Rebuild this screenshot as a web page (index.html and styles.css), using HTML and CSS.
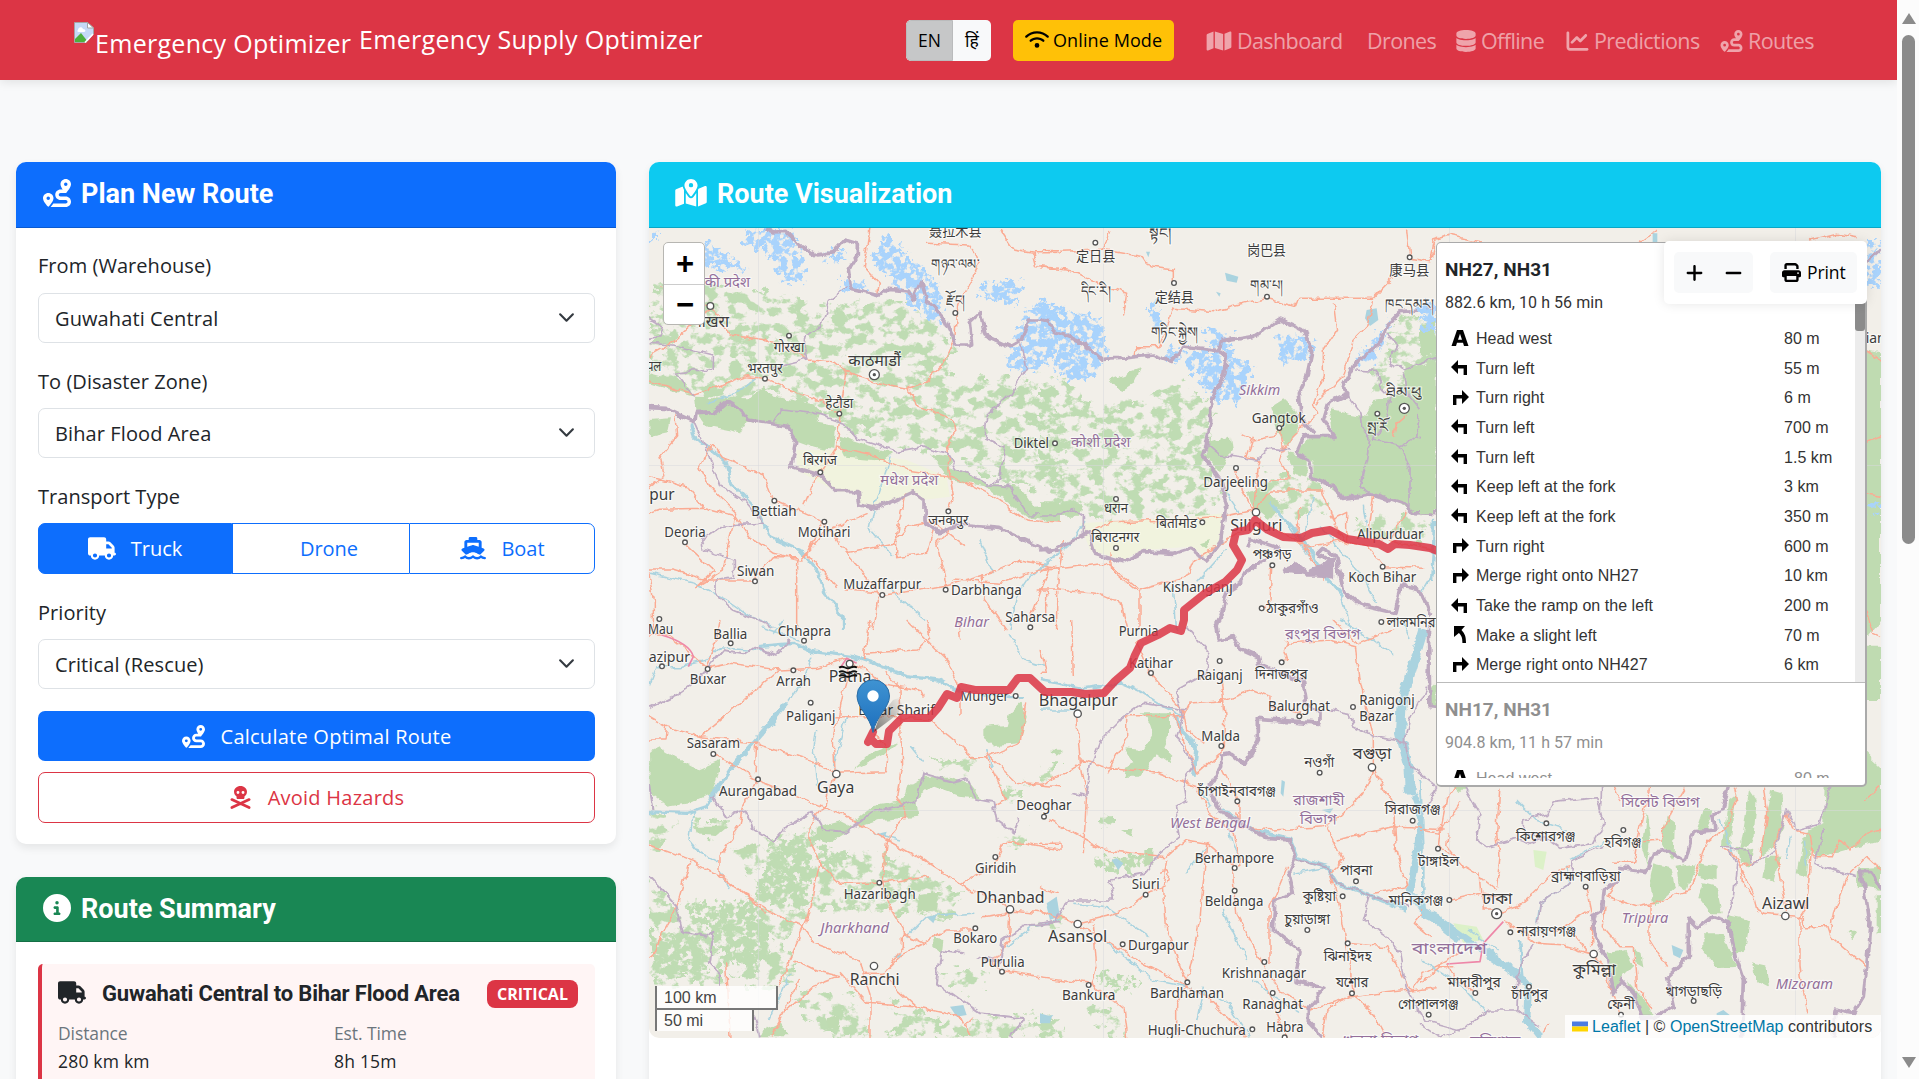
FILE: index.html
```html
<!DOCTYPE html>
<html lang="en">
<head>
<meta charset="utf-8">
<title>Emergency Supply Optimizer</title>
<link rel="stylesheet" href="styles.css">
</head>
<body>
<svg class="defs" width="0" height="0" aria-hidden="true">
  <symbol id="i-route" viewBox="0 0 512 512"><path d="M512 96c0 50.2-59.1 125.1-84.6 155c-3.8 4.4-9.4 6.1-14.5 5H320c-17.7 0-32 14.3-32 32s14.3 32 32 32h96c53 0 96 43 96 96s-43 96-96 96H139.6c8.7-9.9 19.3-22.6 30-36.8c6.3-8.4 12.8-17.6 19-27.2H416c17.7 0 32-14.3 32-32s-14.3-32-32-32H320c-53 0-96-43-96-96s43-96 96-96h39.8c-21-31.5-39.8-67.7-39.8-96c0-53 43-96 96-96s96 43 96 96zM117.1 489.1c-3.8 4.3-7.2 8.1-10.1 11.3l-1.8 2-.2-.2c-6 4.6-14.6 4-20-1.8C59.8 473 0 402.5 0 352c0-53 43-96 96-96s96 43 96 96c0 30-21.1 67-43.5 97.9c-10.7 14.7-21.7 28-30.8 38.5l-.6 .7zM128 352a32 32 0 1 0 -64 0 32 32 0 1 0 64 0zM416 128a32 32 0 1 0 0-64 32 32 0 1 0 0 64z"/></symbol>
  <symbol id="i-truck" viewBox="0 0 640 512"><path d="M48 0C21.5 0 0 21.5 0 48V368c0 26.5 21.5 48 48 48H64c0 53 43 96 96 96s96-43 96-96H384c0 53 43 96 96 96s96-43 96-96h32c17.7 0 32-14.3 32-32s-14.3-32-32-32V288 256 237.3c0-17-6.7-33.3-18.7-45.3L512 114.7c-12-12-28.3-18.7-45.3-18.7H416V48c0-26.5-21.5-48-48-48H48zM416 160h50.7L544 237.3V256H416V160zM112 416a48 48 0 1 1 96 0 48 48 0 1 1 -96 0zm368-48a48 48 0 1 1 0 96 48 48 0 1 1 0-96z"/></symbol>
  <symbol id="i-info" viewBox="0 0 512 512"><path d="M256 512A256 256 0 1 0 256 0a256 256 0 1 0 0 512zM216 336h24V272H216c-13.3 0-24-10.7-24-24s10.7-24 24-24h48c13.3 0 24 10.7 24 24v88h8c13.3 0 24 10.7 24 24s-10.7 24-24 24H216c-13.3 0-24-10.7-24-24s10.7-24 24-24zm40-208a32 32 0 1 1 0 64 32 32 0 1 1 0-64z"/></symbol>
  <symbol id="i-map" viewBox="0 0 576 512"><path d="M384 476.1L192 421.2V35.9L384 90.8V476.1zm32-1.2V88.4L543.1 37.5c15.8-6.3 32.9 5.3 32.9 22.3V394.6c0 9.8-6 18.6-15.1 22.3L416 474.8zM15.1 95.1L160 37.2V423.6L32.9 474.5C17.1 480.8 0 469.2 0 452.2V117.4c0-9.8 6-18.6 15.1-22.3z"/></symbol>
  <symbol id="i-mapdot" viewBox="0 0 576 512"><path d="M408 120c0 54.6-73.1 151.9-105.2 192c-7.7 9.6-22 9.6-29.6 0C241.1 271.9 168 174.6 168 120C168 53.7 221.7 0 288 0s120 53.7 120 120zm8 80.4c3.5-6.9 6.7-13.8 9.6-20.6c.5-1.2 1-2.5 1.5-3.7l116-46.4C558.9 123.4 576 135 576 152V422.8c0 9.8-6 18.6-15.1 22.3L416 503V200.4zM137.6 138.3c2.4 14.1 7.2 28.3 12.8 41.5c2.9 6.8 6.1 13.7 9.6 20.6V451.8L32.9 502.7C17.1 509 0 497.4 0 480.4V209.6c0-9.8 6-18.6 15.1-22.3l122.6-49zM327.8 332c13.9-17.4 35.7-45.7 56.2-77V504.3L192 449.4V255c20.5 31.3 42.3 59.6 56.2 77c20.5 25.6 59.1 25.6 79.6 0zM288 152a40 40 0 1 0 0-80 40 40 0 1 0 0 80z"/></symbol>
  <symbol id="i-db" viewBox="0 0 448 512"><path d="M448 80v48c0 44.2-100.3 80-224 80S0 172.2 0 128V80C0 35.8 100.3 0 224 0S448 35.8 448 80zM393.2 214.7c20.8-7.4 39.9-16.9 54.8-28.6V288c0 44.2-100.3 80-224 80S0 332.2 0 288V186.1c14.9 11.8 34 21.2 54.8 28.6C99.7 230.7 159.5 240 224 240s124.3-9.3 169.2-25.3zM0 346.1c14.9 11.8 34 21.2 54.8 28.6C99.7 390.7 159.5 400 224 400s124.3-9.3 169.2-25.3c20.8-7.4 39.9-16.9 54.8-28.6V432c0 44.2-100.3 80-224 80S0 476.2 0 432V346.1z"/></symbol>
  <symbol id="i-chart" viewBox="0 0 512 512"><path d="M64 64c0-17.7-14.3-32-32-32S0 46.3 0 64V400c0 44.2 35.8 80 80 80H480c17.7 0 32-14.3 32-32s-14.3-32-32-32H80c-8.8 0-16-7.2-16-16V64zm406.6 86.6c12.5-12.5 12.5-32.8 0-45.3s-32.8-12.5-45.3 0L320 210.7l-57.4-57.4c-12.5-12.5-32.8-12.5-45.3 0l-112 112c-12.5 12.5-12.5 32.8 0 45.3s32.8 12.5 45.3 0L240 221.3l57.4 57.4c12.5 12.5 32.8 12.5 45.3 0l128-128z"/></symbol>
  <symbol id="i-wifi" viewBox="0 0 640 512"><path d="M54.2 202.9C123.2 136.7 216.8 96 320 96s196.8 40.7 265.8 106.9c12.8 12.2 33 11.8 45.2-.9s11.8-33-.9-45.2C549.7 79.5 440.4 32 320 32S90.3 79.5 9.8 156.7C-2.9 169-3.3 189.2 8.9 202s32.5 13.2 45.2 .9zM320 256c56.8 0 108.6 21.1 148.2 56c13.3 11.7 33.5 10.4 45.2-2.8s10.4-33.5-2.8-45.2C459.8 219.2 393 192 320 192s-139.8 27.2-190.5 72c-13.3 11.7-14.5 31.9-2.8 45.2s31.9 14.5 45.2 2.8c39.5-34.9 91.3-56 148.2-56zm64 160a64 64 0 1 0 -128 0 64 64 0 1 0 128 0z"/></symbol>
  <symbol id="i-print" viewBox="0 0 512 512"><path d="M128 0C92.7 0 64 28.7 64 64v96h64V64H354.7L384 93.3V160h64V93.3c0-17-6.7-33.3-18.7-45.3L400 18.7C388 6.7 371.7 0 354.7 0H128zM384 352v32 64H128V384 368 352H384zm64 32h32c17.7 0 32-14.3 32-32V256c0-35.3-28.7-64-64-64H64c-35.3 0-64 28.7-64 64v96c0 17.7 14.3 32 32 32H64v64c0 35.3 28.7 64 64 64H384c35.3 0 64-28.7 64-64V384zM432 248a24 24 0 1 1 0 48 24 24 0 1 1 0-48z"/></symbol>
  <symbol id="i-plus" viewBox="0 0 448 512"><path d="M256 80c0-17.7-14.3-32-32-32s-32 14.3-32 32V224H48c-17.7 0-32 14.3-32 32s14.3 32 32 32H192V432c0 17.7 14.3 32 32 32s32-14.3 32-32V288H400c17.7 0 32-14.3 32-32s-14.3-32-32-32H256V80z"/></symbol>
  <symbol id="i-minus" viewBox="0 0 448 512"><rect x="16" y="224" width="416" height="64" rx="32"/></symbol>
  <symbol id="i-ship" viewBox="0 0 576 512"><path fill-rule="evenodd" d="M192 32c0-18 14-32 32-32h128c18 0 32 14 32 32v32h48c26 0 48 22 48 48v128l44 15c23 8 28 33 13 49l-92 92c-22-2-42-12-56-21-60-45-142-45-202 0-14 9-34 19-56 21l-92-92c-15-16-10-41 13-49l44-15V112c0-26 22-48 48-48h48V32zM160 218l107-36c14-4 28-4 42 0l107 36v-90H160z"/><path fill="none" stroke="currentColor" stroke-width="52" stroke-linecap="round" d="M26 470c40-6 60-14 85-34 50 45 120 45 177 0 57 45 127 45 177 0 25 20 45 28 85 34"/></symbol>
  <symbol id="i-skull" viewBox="0 0 448 512"><path fill-rule="evenodd" d="M224 0c80 0 144 54 144 128 0 43-22 80-56 104v28c0 16-12 28-28 28H164c-16 0-28-12-28-28v-28C102 208 80 171 80 128 80 54 144 0 224 0zM168 112a32 32 0 1 0 0 64 32 32 0 1 0 0-64zm112 0a32 32 0 1 0 0 64 32 32 0 1 0 0-64z"/><path fill="none" stroke="currentColor" stroke-width="60" stroke-linecap="round" d="M32 302l384 178M32 480l384-178"/></symbol>
  <symbol id="i-left" viewBox="0 0 18 18"><path d="M0 8l7-7v5h9v10h-3.400V9.500H7V15z"/></symbol>
  <symbol id="i-right" viewBox="0 0 18 18"><path d="M18 8l-7-7v5H2v10h3.400V9.500H11V15z"/></symbol>
  <symbol id="i-slight" viewBox="0 0 18 18"><path d="M3 0h11L10.500 4C14 8 15 10.500 15 17h-3.600c0-5-.5-7-3.500-10L3 11z"/></symbol>
  <symbol id="i-depart" viewBox="0 0 18 18"><path fill-rule="evenodd" d="M6 1h6l5.500 16H13l-1-3.200H6L5 17H.5zM9 4.800L7 10.800h4z"/></symbol>
</svg>

<div class="shell">
<div class="page">
  <header class="navbar">
    <a class="brand">
      <svg class="broken" viewBox="0 0 20 21"><path d="M.5.500h13L19.500 6v14.500H.5z" fill="#c5d9f7" stroke="#a5a5a5"/><path d="M4 8c0-3 4-4 5-1 3 0 3 3 1 3H5c-2 0-2-1.500-1-2z" fill="#fff"/><path d="M1 20v-3l6-6 7 9z" fill="#4daf3c"/><path d="M20 12L12 21h8z" fill="#dc3545"/><path d="M19 12L11 20.500" stroke="#fff" stroke-width="1.500"/><path d="M13.500.500V6h6z" fill="#fff" stroke="#a5a5a5"/></svg>
      <span class="alt">Emergency Optimizer</span>
      <span class="name">Emergency Supply Optimizer</span>
    </a>
    <div class="lang"><button class="on">EN</button><button>हिं</button></div>
    <button class="mode"><svg class="ic w22"><use href="#i-wifi"/></svg><span>Online Mode</span></button>
    <nav>
      <a class="n1"><svg class="ic"><use href="#i-map"/></svg>Dashboard</a>
      <a class="n2">Drones</a>
      <a class="n3"><svg class="ic"><use href="#i-db"/></svg>Offline</a>
      <a class="n4"><svg class="ic"><use href="#i-chart"/></svg>Predictions</a>
      <a class="n5"><svg class="ic"><use href="#i-route"/></svg>Routes</a>
    </nav>
  </header>

  <main>
    <aside>
      <section class="card">
        <h5 class="head blue"><svg class="ic"><use href="#i-route"/></svg>Plan New Route</h5>
        <div class="form">
          <label>From (Warehouse)</label>
          <div class="select">Guwahati Central<svg viewBox="0 0 16 16"><path d="M2 5l6 6 6-6"/></svg></div>
          <label>To (Disaster Zone)</label>
          <div class="select">Bihar Flood Area<svg viewBox="0 0 16 16"><path d="M2 5l6 6 6-6"/></svg></div>
          <label>Transport Type</label>
          <div class="group">
            <button class="active"><svg class="ic"><use href="#i-truck"/></svg>Truck</button>
            <button class="drone">Drone</button>
            <button><svg class="ic"><use href="#i-ship"/></svg>Boat</button>
          </div>
          <label>Priority</label>
          <div class="select">Critical (Rescue)<svg viewBox="0 0 16 16"><path d="M2 5l6 6 6-6"/></svg></div>
          <button class="btn primary"><svg class="ic"><use href="#i-route"/></svg>Calculate Optimal Route</button>
          <button class="btn danger"><svg class="ic"><use href="#i-skull"/></svg>Avoid Hazards</button>
        </div>
      </section>
      <section class="card">
        <h5 class="head green"><svg class="ic"><use href="#i-info"/></svg>Route Summary</h5>
        <div class="summary">
          <div class="trip"><svg class="ic"><use href="#i-truck"/></svg><h6>Guwahati Central to Bihar Flood Area</h6><span class="badge">CRITICAL</span></div>
          <dl>
            <div><dt>Distance</dt><dd>280 km km</dd></div>
            <div><dt>Est. Time</dt><dd>8h 15m</dd></div>
          </dl>
        </div>
      </section>
    </aside>

    <section class="card mapcard">
      <h5 class="head cyan"><svg class="ic"><use href="#i-mapdot"/></svg>Route Visualization</h5>
      <div class="map">
        <svg class="tiles" viewBox="649 228 1232 810">
          <defs>
            <filter id="speck" x="-5%" y="-5%" width="110%" height="110%" color-interpolation-filters="sRGB">
              <feTurbulence type="fractalNoise" baseFrequency="0.026 0.032" numOctaves="4" seed="8" result="n"/>
              <feColorMatrix in="n" values="0 0 0 0 0  0 0 0 0 0  0 0 0 0 0  9 0 0 0 -4.2" result="m"/>
              <feDisplacementMap in="SourceGraphic" in2="n" scale="80" xChannelSelector="G" yChannelSelector="B" result="d"/>
              <feComposite in="d" in2="m" operator="in"/>
            </filter>
            <filter id="dense" x="-5%" y="-5%" width="110%" height="110%" color-interpolation-filters="sRGB">
              <feTurbulence type="fractalNoise" baseFrequency="0.05" numOctaves="3" seed="5" result="n"/>
              <feColorMatrix in="n" values="0 0 0 0 0  0 0 0 0 0  0 0 0 0 0  9 0 0 0 -3.5" result="m"/>
              <feDisplacementMap in="SourceGraphic" in2="n" scale="60" xChannelSelector="G" yChannelSelector="B" result="d"/>
              <feComposite in="d" in2="m" operator="in"/>
            </filter>
            <filter id="rough" x="-5%" y="-5%" width="110%" height="110%" color-interpolation-filters="sRGB">
              <feTurbulence type="fractalNoise" baseFrequency="0.03" numOctaves="3" seed="3"/>
              <feDisplacementMap in="SourceGraphic" scale="22" xChannelSelector="R" yChannelSelector="G"/>
            </filter>
            <linearGradient id="pin" x1="0" y1="0" x2="0" y2="1"><stop offset="0" stop-color="#3f93d2"/><stop offset="1" stop-color="#1d6fbd"/></linearGradient>
            <linearGradient id="shade" x1="0" y1="1" x2="1" y2="0"><stop offset="0" stop-color="#000" stop-opacity=".5"/><stop offset="1" stop-color="#000" stop-opacity="0"/></linearGradient>
          </defs>
          <rect x="649" y="228" width="1232" height="810" fill="#f2efe9"/>

          <!-- north-west sheet -->
          <g transform="translate(640 220) scale(.33333)">
            <g class="scrub" filter="url(#speck)">
              <path d="M30 200L100 200 200 200 300 200 450 230 560 260 640 240 760 230 900 320 935 360 930 480 1260 470V830L1040 770 930 690 800 690 600 620 540 560 380 520 300 540 170 530 30 470z"/>
              <path d="M740 300L930 350 900 450 720 480zM400 480L620 560 900 640 900 690 620 620 420 530z"/>
            </g>
            <g class="farm"><path d="M470 690L590 690 800 720 920 770 930 830 850 840 820 815 710 865 660 850 650 815 590 815 470 750z"/></g>
            <g class="wood" filter="url(#rough)">
              <path d="M27 460L140 490 160 530 27 490zM27 600L90 595 80 640 30 650zM165 530L330 535 375 500 400 530 520 550 545 580 530 605 585 615 580 690 520 680 465 660 440 620 320 605 300 640 200 620 170 580z"/>
              <path d="M590 645L760 700 730 720 620 710zM870 700L930 715 935 745 1040 790 1140 800 1180 860 1260 850V910L1160 890 1040 800 930 780z"/>
            </g>
            <g class="ice" filter="url(#dense)"><path d="M190 60L260 100 320 150 190 140zM320 24H460L500 180 430 190 380 90 310 70zM560 90H620V120H560zM600 170L680 200 650 215 600 200zM690 110L745 45 800 100 900 200 910 320 860 290 790 240 770 190 700 130zM1020 190L1140 180 1130 250 1030 240zM1150 290L1210 230 1260 300V400L1180 460 1100 440 1120 380zM27 24H60V60H27z"/></g>
            <g class="river" filter="url(#rough)">
              <path stroke-width="9" d="M155 610L165 655 215 690 260 730 275 790 350 870 390 950 480 990 530 1050 560 1130 610 1190V1230"/>
              <path d="M30 1060L160 1090 260 1140 330 1190 410 1220M1260 1000L1170 1070 1130 1130 1110 1230M750 710L710 830 690 930 760 1010M740 1100L860 1200M1020 960L1060 1060M350 470L290 520 200 550"/>
            </g>
            <g class="road" filter="url(#rough)">
              <path d="M27 410L80 380 150 320 215 260 60 200M215 265L270 345 380 360 450 385 500 420 580 425 625 460 700 485 800 505 850 490 910 430 945 350 950 260 1020 130 990 75 860 70M1080 30L1120 90 1180 100 1190 140 1260 145M1180 95H1260M690 24L670 140 715 190 710 225M620 460L605 540 600 590 585 690 520 790 490 860M27 480L160 525 320 470 375 475 430 500 520 530 600 585M800 505L840 560 940 600 945 640 920 680 930 770 940 830 925 870M585 680L700 705 800 750 940 770 1060 830 1160 900 1260 910M105 585L110 650 60 710 75 770 27 800M27 880L60 868 190 865 290 890 330 950 400 1000 480 1020 560 930 680 880M190 865L140 800 27 770M215 670L180 740 210 800 290 880 270 950 250 1050 170 1100 220 1050 135 970M27 1050L100 1050 200 1080 340 1080 400 1010 470 1010 470 1230M215 670L250 715 370 765 400 840 550 905 620 1000 720 1120 700 1230M550 910L500 1000 590 1100M730 1120L620 1110M730 1125L910 1100 1050 1060 1140 1020 1260 1045M610 1000L760 970 800 920 880 905 975 980M920 1100L890 970 930 930M940 1080L1080 1090 1230 1040 1170 1200M795 820L770 940 770 1010 860 1000 890 910M1030 1060V1130L1100 1230M27 1060L40 1140V1230M1190 1110H1220V1190"/>
            </g>
            <g class="admin" filter="url(#rough)">
              <path d="M27 370L100 375 220 405 220 445 105 460 160 530M375 450L500 420 490 360 540 320 570 240 620 200M400 605L425 570 520 580 610 610 650 655 770 695 850 680 920 700 950 750 1050 795 1110 800 1165 885 1260 885M1145 370L1160 440 1110 520 1040 590 1035 655 1095 680 1080 770 1040 800M162 605L200 690 240 800 310 840 370 910 250 915 185 960 190 990 280 1020 280 1070 225 1080 225 1120 280 1170 400 1220M27 295L70 320 60 350 27 355"/>
            </g>
            <g class="nation" filter="url(#rough)">
              <path d="M375 24L400 36 440 34 475 75 530 105 580 98 615 60 655 72 655 105 625 150 632 205 720 225 745 205 805 210 820 235 843 185 860 240 915 300 940 350 945 375 995 375 988 305 1020 275 1035 345 1110 380 1145 360 1165 300 1225 300"/>
              <path d="M27 563L75 565 162 605 165 578 225 575 260 545 310 575 325 600 440 618 470 665 455 740 540 765 590 815 655 815 660 855 710 865 820 815 855 840 855 905 900 938 950 915 1080 925 1230 995 1260 990"/>
            </g>
          </g>

          <!-- north-east sheet -->
          <g transform="translate(1040 220) scale(.33333)">
            <g class="scrub" filter="url(#speck)"><path d="M0 500L90 480 150 560 320 540 430 480 520 560 500 700 550 830 480 900 300 920 80 880 0 830zM690 760L830 780 870 880 700 900 620 870zM980 490L1090 280 1190 330V480L1000 520zM940 900L1170 890 1150 960 960 950z"/></g>
            <g class="farm"><path d="M120 910L450 890 550 880 540 960 500 1010 450 980 310 990 250 1020 150 990z"/></g>
            <g class="wood" filter="url(#rough)">
              <path d="M210 480L300 445 280 490 240 515zM500 670L570 650 575 690 540 760 500 710zM690 560L730 535 765 570 780 620 740 680 715 640zM0 850L130 850 120 890 0 890zM620 820L660 800 720 850 690 900 640 860zM480 970L510 960 500 990zM1090 420L1130 440 1190 420V480H1100zM540 650L570 660 560 690 530 680z"/>
              <path d="M870 570L980 590 1000 540 1060 530 1100 480 1190 470V870L1110 870 1000 820 910 830 820 770 820 720 770 690 810 650 880 655z"/>
              <path d="M740 700L800 710 800 770 760 760z"/>
            </g>
            <g class="ice" filter="url(#dense)"><path d="M0 240L60 260 180 300 200 400 160 470 90 480 40 450 60 370 0 320zM330 250H360V320H330zM480 320L580 350 570 390 640 440 590 550 520 540 480 480 440 440 430 390 520 390zM710 350H780L830 370 810 420 720 430zM950 410L1050 300 1000 430 950 440zM1150 280L1190 290V340zM390 380L430 390 420 420 380 430z"/></g>
            <g class="lake"><path d="M555 158L595 170 590 188 560 182zM980 270L1010 265 1015 300 990 318 975 295zM318 95H330L325 112zM528 215L542 220 538 230z"/></g>
            <g class="river" filter="url(#rough)">
              <path d="M135 900L90 970 0 1050M560 820L600 880M690 850L760 940 830 1040 900 1110 930 1230M840 920L960 1060 1010 1150M970 860L985 960M1180 890V1060L1150 1110M400 1100L410 1230M560 990L470 1090M820 830L790 960 800 1000"/>
              <path stroke-width="10" d="M700 860L790 960 850 1060 910 1130M1185 900L1175 1080"/>
            </g>
            <g class="road" filter="url(#rough)">
              <path d="M210 30L190 90 10 95M190 90L310 110 330 140 400 150 400 185M0 140L120 155 130 175 260 220 250 290M400 260L380 330 355 380 290 380 285 410M400 265L520 275 680 235 770 260 780 235 1000 235 1060 170M1100 30L1110 115 1170 125 1190 50M880 250L890 330 850 390 850 470 820 550 830 580 750 660 730 690M1000 240L980 320 940 360 910 470 830 550M600 640L640 660 700 650 720 620 730 690 720 720 750 780 690 780M640 650L620 710 660 720 650 770 640 870M590 750L600 800 640 870 570 885 420 900 210 905 120 950M640 880L690 810 850 810 880 900 920 880V960L800 980 690 920M630 920L460 1020 440 1070 300 1110 200 1030 20 1050 0 1060M210 1000L215 1050 300 1120V1230M70 960L50 1110 170 1120 240 1150 260 1230M0 1110H60M50 1115V1230M660 890V900M695 1040L690 1140 665 1165M870 885L915 965 985 980 1030 1040 1150 1045M1000 830L985 950 1180 990M1100 870L1050 960M780 860L770 940 850 1080M1060 650L1070 610 1100 585"/>
            </g>
            <g class="admin" filter="url(#rough)">
              <path d="M500 670L540 705 650 720 690 685 750 690M920 525L960 580 965 620 990 650 980 720 960 800 1000 825M945 450L1010 455 1020 500 1050 530 1040 600 1000 660 1100 680M1040 340L1070 370 1050 430 1090 450 1190 410M1090 460L1100 520 1140 570 1130 650 1190 670M1130 650L1080 680 1110 750V860M0 885L60 885 95 865 130 890 130 940"/>
            </g>
            <g class="nation" filter="url(#rough)">
              <path d="M0 300L25 305 45 335 130 370 185 418 240 415 340 405 395 425 430 378 535 392 545 365 640 350 720 297 795 330 815 400 800 470 775 520 780 590 825 640"/>
              <path d="M535 392L562 410 555 460 515 540 515 600 490 710 540 780 560 860 545 960 500 1020 450 985 400 1000 310 995 250 1025 165 1000 145 935 100 960 50 985 0 990"/>
              <path d="M1190 265L1085 275 1040 320 1020 370 945 430 910 500 920 525 865 550 850 600 885 650 790 650 770 695 810 720 815 775 880 800 905 835 1000 825 1095 855 1120 875 1190 878"/>
              <path d="M680 1015L620 1050 600 1090 560 1115 550 1160 525 1230M620 985L630 955 715 985M735 1045L765 1035 800 1065 880 1065 870 1020 830 1000 845 985 890 1010 910 1110 960 1155 1065 1180 1085 1095 1145 1110 1175 1190"/>
              <path fill="#bda9bf" d="M735 1050L765 1030 800 1060 880 1020 880 1070 780 1055z"/>
            </g>
          </g>

          <!-- south-west sheet -->
          <g transform="translate(640 620) scale(.33333)">
            <g class="scrub" filter="url(#speck)"><path d="M27 560L110 600 100 640 27 700zM27 780L120 880 200 900 240 1000 240 1090 100 1100 27 1080zM150 600H260V640H160zM270 680L520 620 560 700 720 690 850 760 960 820 930 900 780 880 500 870 430 960 480 1060 380 1110 260 1060 220 900 380 830zM380 800L500 780 480 920 380 950zM480 1110L640 1130 700 1252H560L480 1180zM900 1060L1040 1050 1030 1110 940 1100zM740 1150L900 1200 1200 1190 1260 1252H760zM1080 640H1160V670H1080zM890 420L1000 430 990 460 900 440zM1090 490L1160 480 1130 540 1080 530zM1180 920L1260 880V940z"/></g>
            <g class="scrub" filter="url(#dense)"><path d="M120 850L350 840 400 960 350 1060 240 1000 190 900zM400 660L520 650 500 860 350 840zM520 640L620 720 560 760zM30 950L180 940 210 1060 60 1070z"/></g>
            <g class="wood" filter="url(#rough)">
              <path d="M27 400L60 385 120 420 170 450 240 420 240 450 215 520 150 550 80 560 30 520zM1030 320L1100 315 1110 280 1145 245 1160 290 1140 370 1060 375 1030 350zM645 600L700 555 790 540 800 500 850 470 930 470 990 490 1030 540 960 530 880 500 830 540 835 590 720 600 660 620zM530 620L600 600 640 620 560 670 530 650zM640 450L690 400 770 370 740 400 700 420zM280 690L350 670 350 700 290 700zM165 620L260 620 230 645 170 640zM840 820L900 810 890 870 830 880zM370 1230L420 1205 450 1252H360zM880 955L910 960 905 1000 880 980zM560 1195L600 1185 590 1230 560 1220z"/>
            </g>
            <g class="river" filter="url(#rough)">
              <path stroke-width="14" d="M210 530L280 440 350 360 400 300 440 250"/>
              <path stroke-width="10" d="M27 575L140 580 200 560 220 525M350 80L460 70 520 95 640 110 700 130 800 170 900 180 960 215 1110 230 1150 230"/>
              <path d="M440 250L490 180 520 110M27 200L50 140 120 140 200 120 240 80 360 90M160 570L150 660 180 700 235 730M1110 40L1150 120 1220 140M580 440L620 290M530 500L520 390 530 330M850 430L810 380M240 750L270 810M390 1200L450 1060M1260 900L1180 920 1100 980M800 950L860 890 1000 880M700 640L780 660M1040 390L1060 440M430 0L400 40M370 24L480 60"/>
            </g>
            <g class="lake"><path d="M1220 850L1250 830 1260 890H1230zM860 890L890 885 880 910zM930 1160L970 1155 980 1185 950 1190zM1200 1190L1240 1185 1220 1210zM760 1010L785 1000 780 1015zM720 640L740 635 735 650z"/></g>
            <g class="road" filter="url(#rough)">
              <path d="M27 45H80L150 100 200 145 270 130 420 150 530 145 620 115M240 0L225 80 200 145M630 125L580 360 585 450 550 560 510 620 510 670 540 730 500 900 460 990 415 1100M585 460L740 455 745 380 700 350M780 200L785 440 770 530 800 590 740 660 725 790 750 860 790 930V980L740 1050M27 290L80 320 180 350 350 370 530 430 590 460M80 320L75 360H27M180 350L300 250 420 150M350 370L345 460M220 400L350 480 620 590 740 660 850 720 960 790 1000 820M350 480L310 560 300 620 240 710 240 770M27 675L160 725 240 770 400 880 490 920 520 970 660 1020 670 1060 730 1060M240 760L380 880M540 730L600 790 720 790 870 770M670 120L690 0M670 100L830 90 870 50 860 0M620 115L680 150 720 190 840 210 850 230M580 290L770 290M770 295L870 300 1000 410 1040 410 1100 540 1060 560M780 200L740 160M800 0L920 120 960 210M950 0L960 60M960 230L960 290M1040 400L1130 490 1260 500M1040 410L1140 370 1160 250M960 790L1060 740 1090 670 1160 670 1260 690M1000 810L1110 870 1220 880M1030 890L1090 880 1110 870 1105 960 1060 1030 1080 1050 1200 1070M790 940L850 970 920 930 1010 930M730 1070L830 1160 960 1190 990 1250M730 1060L790 1000 850 970M670 1060L690 1120V1252M600 1070L520 1100 430 1180M600 1060L680 1150 820 1160M460 1020L520 1050 600 1070M150 725L110 860 70 930 40 1010 27 1020M260 1030L270 1252M390 1252L430 1180 480 1080M1000 1190L970 1220"/>
            </g>
            <g class="pinkroad"><path d="M65 45Q150 70 160 110L145 140M600 145L620 115 650 130"/></g>
            <g class="admin" filter="url(#rough)">
              <path stroke-width="6" d="M27 265L110 225 160 190 200 150 250 90 310 100 340 80 410 105 450 60M215 525L260 590 320 570 340 630 400 665 440 620 520 575 550 630 620 635 700 575 790 555 830 540 850 460 940 485 980 475 1010 540 1060 550 1070 600 1120 635 1140 590M27 770L110 860 130 940 200 950 220 935 210 1030 240 1060V1100M970 1000L905 990 890 1090 960 1140 1020 1180 1150 1195 1110 1252M1010 1010L1080 1030 1090 960 1150 920 1260 910M340 1190L360 1252M27 490L40 570"/>
            </g>
          </g>

          <!-- south-central sheet -->
          <g transform="translate(1040 620) scale(.33333)">
            <g class="wood" filter="url(#rough)">
              <path d="M305 280L390 280 390 340 370 380 400 410 390 430 350 400 300 470 250 470 255 440 280 430 250 385 310 390 340 340 330 310zM310 690L340 690 340 730 310 740zM30 395H70L50 410zM240 630L280 630 275 650zM1165 210L1190 190V260H1165z"/>
            </g>
            <g class="scrub" filter="url(#dense)"><path d="M165 710H310L290 755 180 750zM180 1060L300 1080 290 1110 190 1100z"/></g>
            <g class="scrub" filter="url(#speck)"><path d="M140 1150L270 1200 230 1252 150 1200zM0 1200H70V1252H0zM0 430L60 430V470H0zM180 580H210V620H180z"/></g>
            <g class="lake"><path d="M215 720L230 715 250 730 235 750zM20 860L50 830 55 890 30 900zM0 1180L35 1190 30 1210H0zM725 480L735 485 730 530 722 520zM845 570L880 565 870 580z"/></g>
            <g class="river" filter="url(#rough)">
              <path stroke-width="8" d="M0 180L130 205 240 190 300 215 370 260 430 290"/>
              <path stroke-width="14" d="M410 290L420 330 470 380 460 470"/>
              <path stroke-width="30" d="M1150 30L1120 130 1085 250 1080 340 1105 440 1110 520"/>
              <path stroke-width="20" d="M1120 520L1145 590 1130 700 1110 810 1150 870 1260 960"/>
              <path stroke-width="12" d="M540 570L640 630 750 660 770 710 860 740 890 790 1000 830 1100 870"/>
              <path d="M900 0L1000 60 1060 110M200 970L340 1080 440 1100 560 1150 630 1252M0 270L100 270M330 950L200 860 100 850M550 870L580 940 620 1020M640 1080L700 1130 780 1180M490 1100L470 1200M560 600L580 680 600 720M480 500L510 560M760 760L870 740M500 680L440 760M1090 0L1110 60"/>
            </g>
            <g class="road" filter="url(#rough)">
              <path d="M290 60L330 160 430 270 440 330 490 370M95 0L100 170M0 90L20 160H0M540 150L555 280 550 380 540 400 470 460M470 460L420 340 400 270M110 290L120 420 140 520 130 700M120 420L200 440 350 460 470 500 510 580 580 640 600 740M0 490L70 460 120 430M200 460L260 350 260 290 430 290 450 250 560 240 640 210 690 230 690 260 780 280M740 120L730 90 740 60M740 70L870 60 950 80 960 180 1000 350 1000 440M880 0L950 70 1060 30M1000 450L970 520 900 590 850 620 700 630 600 620 590 580M1000 450L1060 560 1070 700 1100 800 1000 820M890 660L1060 620 1220 630M860 620L910 720 870 760M1260 550L1200 640 1195 680 1230 700M30 600L190 690 380 710 440 660 500 670 480 900 440 1090M500 670L580 740 590 880 670 1030M380 720L370 800 380 930 440 1090M380 800L320 820 240 880 110 910M380 790Q400 740 360 760M0 870L110 910 240 990 440 1100 500 1130 620 1252M0 800L60 820M160 910L170 1040 150 1090 0 1070M150 1090L250 1170 260 1252M440 1100L410 1150 410 1252M670 1030L720 1110 810 1170 930 1130 1110 1110 1190 1100M690 1030L690 860 740 740M670 1080L700 1150 740 1252M870 760L900 860 920 970 1040 980 1110 1110M920 970L940 1120 860 1170 850 1252M1110 1110L1150 1060 1260 1000M1170 950L1120 910 1150 870M940 1130L1000 1180 1040 1252M550 450L600 550V600M0 670H60V690"/>
            </g>
            <g class="admin" filter="url(#rough)">
              <path d="M440 270L310 250 240 300 180 360 150 440 140 530 100 520M440 20L510 100 500 160 410 210 430 290 410 350 460 440 430 480 440 540 410 560 420 650 360 700 310 760 210 780 220 840 80 840 50 900 0 910M870 270L930 280 940 320 1000 350 1095 365 1110 300 1160 200M1095 365L1110 440 1190 500 1150 580M990 830L970 900 1040 950 1080 1000 1100 1110 1150 1200 1260 1230M1170 0L1160 180"/>
            </g>
            <g class="nation" filter="url(#rough)">
              <path d="M525 0L535 60 580 50 600 85 655 110 660 135 790 185 800 250 840 280 840 310 655 295 655 360 615 435 575 400 545 405 545 440 510 500 540 580 590 600 680 655 745 660 765 710 745 760 760 820 705 840 700 930 780 990 765 1085 855 1105 805 1165 805 1210 845 1252"/>
              <path d="M745 660L770 715 860 740 890 790 1000 830 1110 860" stroke-width="5"/>
              <path d="M1165 30L1170 260 1190 262"/>
            </g>
          </g>

          <!-- strip east of the itinerary -->
          <g transform="translate(1420 220) scale(.33333)">
            <g class="wood" filter="url(#rough)"><path d="M1335 390L1383 400V1200L1335 1260zM0 320L45 300V400H0zM0 480H45V880H0zM1335 1280H1383V1440H1335z"/></g>
            <g class="ice" filter="url(#dense)"><path d="M1340 60H1383V80L1340 90zM1340 100H1383V200H1340zM0 240H48V330H0zM1340 850H1383V880H1340z"/></g>
            <g class="road" filter="url(#rough)"><path d="M1170 60L1250 40 1310 50M30 120L40 60 90 45 200 70M660 65L710 30M1335 390L1383 420M1335 670L1383 650M1335 820L1383 830M1335 1160L1360 1240 1383 1250"/></g>
            <g class="nation" filter="url(#rough)"><path d="M1383 85L1335 130"/></g>
            <g class="river"><path stroke-width="14" d="M705 40V70"/></g>
          </g>

          <!-- south-east sheet -->
          <g transform="translate(1420 780) scale(.33333)">
            <g class="wood" filter="url(#rough)">
              <path d="M1220 -160L1340 -80 1383 -40V180L1200 230 1140 190 1170 145 1210 130zM680 95L690 180 680 260 665 200zM740 110L765 130 760 240 720 190zM850 90L880 90 860 150 830 150zM925 60L950 40 930 200 905 200zM1050 30L1085 40 1090 150 1060 200 1020 230zM990 30L1010 60 1000 180 960 210zM700 250L750 260 765 320 700 380 690 300zM770 260L830 250 800 330 775 310zM840 250L890 260 890 300 830 290zM850 310L890 320 905 400 870 400 835 350zM920 405L990 420 975 510 940 530zM850 460L910 460 950 560 890 565 850 510zM995 550L1040 560 1050 620 1010 600zM1285 455L1315 455 1300 475zM1315 265L1383 260V330L1310 320zM1370 340H1383V460H1370zM950 200L1000 210 990 260 960 250zM560 520L620 510 640 560 600 600 580 640zM640 500L665 520 670 560 650 550zM620 600L690 680 700 710 660 705zM1040 230L1080 230 1060 310 1030 290zM1150 170L1170 200 1160 290 1130 280zM100 20H140L120 40z"/>
            </g>
            <g class="farm green"><path d="M100 430L170 440 190 480 130 490zM340 210L380 215 370 270 345 260z"/></g>
            <g class="river" filter="url(#rough)">
              <path stroke-width="22" d="M10 395L60 420 130 470 230 540 290 580 325 620 320 720 360 770"/>
              <path stroke-width="8" d="M300 480L310 590M0 0L10 200V400"/>
              <path d="M450 240L550 190M440 260L450 310 360 370 350 430M290 60L350 120 440 150M1110 170L1100 240M1150 180L1160 260M900 120L940 220M150 450L230 510M300 460L460 440M0 540L130 620 200 700"/>
            </g>
            <g class="lake"><path d="M755 495L790 510 780 535 760 525zM890 700L910 690 930 706H890z"/></g>
            <g class="road" filter="url(#rough)">
              <path d="M240 20L230 160 240 230 230 320M0 150L60 160 80 60 110 20M85 160L80 200 130 260 180 290 230 330M90 360L180 340 230 350M180 280L190 390H240M230 400L290 380 340 340 400 280 450 260M250 420L310 460 350 490 430 495 520 520M510 390L400 460M460 460L500 510M520 520L550 570 600 700M500 320L515 390 515 500M560 350L650 380 700 370 810 330 840 240 860 190 920 140 950 60 940 20M670 185L720 180 750 100 800 20M690 20L650 190 640 250 580 250M555 380L550 440 600 500 640 500M690 370L690 480 740 560M640 500L650 620 700 690M600 300L560 350M1030 20L1040 100 1020 240 960 260 970 320 1000 350 1010 390 1030 400 1150 410 1150 440 1220 440 1230 470 1290 520 1340 560M1100 100L1120 150 1170 160 1180 230 1240 230 1260 180 1290 210 1340 160 1383 150M1100 100L1060 200 1080 280 1100 390M1175 200L1160 380 1140 410V560L1160 700M1230 460L1240 400 1280 290 1340 230 1383 270M1335 60L1380 20M910 210L940 220 1000 340M0 610L60 560 100 560M80 550L100 590 160 630M390 730L370 760M580 20L600 60"/>
            </g>
            <g class="pinkroad"><path d="M80 552L180 545 190 490 250 425"/></g>
            <g class="admin" filter="url(#rough)">
              <path d="M135 20L180 100 170 180 200 200 290 175 330 190 370 170 420 205 520 190 550 130 530 50 400 65 380 100 310 120 310 150 370 180M550 200L460 240 450 310 360 370 355 430M0 730L60 770 140 740 210 690 290 690 360 740M290 690L300 560 340 490M1230 20L1200 130 1130 150 1100 90 1080 160 1060 220 1000 250 980 210 900 200M1210 150L1185 250 1310 290M930 210L950 260 940 350 920 410M545 20L540 120"/>
            </g>
            <g class="nation" filter="url(#rough)">
              <path d="M925 20L905 90 880 105 885 150 820 155 795 245 745 212 700 220 680 275 595 265"/>
              <path d="M600 305L550 330 545 390 515 410 525 470 560 540 580 640 605 600 640 640 665 710 700 710 760 680 740 590 805 530 805 415 835 445 880 410 925 425 950 540 970 600 965 770"/>
              <path d="M1383 325L1350 275 1320 275 1335 330 1350 430 1340 560 1330 650 1300 700 1245 690 1240 770"/>
            </g>
          </g>

          <g class="seam"><path d="M758.500 228V1038M1103.500 228V1038M1449.500 228V1038M1795.500 228V1038M649 465.500H1881M649 810.500H1881"/></g>

          <!-- place names -->
          <g class="names" transform="translate(640 220) scale(.33333)">
            <text class="region" x="262" y="200" textLength="136" lengthAdjust="spacingAndGlyphs">की प्रदेश</text>
            <text class="big" x="213" y="320" textLength="108" lengthAdjust="spacingAndGlyphs">पोखरा</text>
            <text x="447" y="396" textLength="92" lengthAdjust="spacingAndGlyphs">गोरखा</text>
            <text x="375" y="460" textLength="106" lengthAdjust="spacingAndGlyphs">भरतपुर</text>
            <text x="42" y="452" textLength="44" lengthAdjust="spacingAndGlyphs">पल</text>
            <text class="big" x="704" y="437" textLength="158" lengthAdjust="spacingAndGlyphs">काठमाडौं</text>
            <text x="598" y="565" textLength="84" lengthAdjust="spacingAndGlyphs">हेटौडा</text>
            <text x="540" y="735" textLength="102" lengthAdjust="spacingAndGlyphs">बिरगंज</text>
            <text class="region" x="808" y="796" textLength="174" lengthAdjust="spacingAndGlyphs">मधेश प्रदेश</text>
            <text x="925" y="914" textLength="120" lengthAdjust="spacingAndGlyphs">जनकपुर</text>
            <text x="946" y="47" textLength="158" lengthAdjust="spacingAndGlyphs">聂拉木县</text>
            <text x="946" y="148" textLength="144" lengthAdjust="spacingAndGlyphs">གཉའ་ལམ་</text>
            <text x="946" y="255" textLength="58" lengthAdjust="spacingAndGlyphs">རྫོང།</text>
            <text x="1174" y="685" textLength="106" lengthAdjust="spacingAndGlyphs">Diktel</text>
            <text class="big" x="66" y="840" textLength="76" lengthAdjust="spacingAndGlyphs">pur</text>
            <text x="402" y="888" textLength="136" lengthAdjust="spacingAndGlyphs">Bettiah</text>
            <text x="135" y="951" textLength="124" lengthAdjust="spacingAndGlyphs">Deoria</text>
            <text x="552" y="951" textLength="158" lengthAdjust="spacingAndGlyphs">Motihari</text>
            <text x="347" y="1067" textLength="112" lengthAdjust="spacingAndGlyphs">Siwan</text>
            <text x="727" y="1108" textLength="234" lengthAdjust="spacingAndGlyphs">Muzaffarpur</text>
            <text x="1039" y="1124" textLength="212" lengthAdjust="spacingAndGlyphs">Darbhanga</text>
            <text class="region it" x="995" y="1222" textLength="104" lengthAdjust="spacingAndGlyphs">Bihar</text>
            <text x="1171" y="1207" textLength="150" lengthAdjust="spacingAndGlyphs">Saharsa</text>
            <g class="dots"><circle cx="211" cy="258" r="10"/><circle cx="447" cy="347" r="7"/><circle cx="375" cy="476" r="7"/><circle cx="598" cy="581" r="7"/><circle cx="541" cy="757" r="7"/><circle cx="925" cy="874" r="7"/><circle cx="946" cy="279" r="7"/><circle cx="1245" cy="670" r="7"/><circle cx="403" cy="842" r="7"/><circle cx="135" cy="967" r="7"/><circle cx="553" cy="905" r="7"/><circle cx="345" cy="1084" r="7"/><circle cx="727" cy="1125" r="7"/><circle cx="917" cy="1109" r="7"/><circle cx="1171" cy="1222" r="7"/><circle cx="58" cy="1197" r="7"/><circle cx="703" cy="464" r="15"/><circle class="core" cx="703" cy="464" r="5"/></g>
          </g>
          <g class="names" transform="translate(1040 220) scale(.33333)">
            <text x="360" y="55" textLength="66" lengthAdjust="spacingAndGlyphs">སྟེང།</text>
            <text x="167" y="122" textLength="118" lengthAdjust="spacingAndGlyphs">定日县</text>
            <text x="167" y="228" textLength="90" lengthAdjust="spacingAndGlyphs">དིང་རི།</text>
            <text x="680" y="105" textLength="116" lengthAdjust="spacingAndGlyphs">岗巴县</text>
            <text x="680" y="210" textLength="98" lengthAdjust="spacingAndGlyphs">གམ་པ།</text>
            <text x="403" y="247" textLength="118" lengthAdjust="spacingAndGlyphs">定结县</text>
            <text x="403" y="350" textLength="142" lengthAdjust="spacingAndGlyphs">གཏིང་སྐྱེས།</text>
            <text x="1108" y="166" textLength="120" lengthAdjust="spacingAndGlyphs">康马县</text>
            <text x="1108" y="268" textLength="144" lengthAdjust="spacingAndGlyphs">ཁང་དམར།</text>
            <text class="region it" x="659" y="526" textLength="124" lengthAdjust="spacingAndGlyphs">Sikkim</text>
            <text x="716" y="608" textLength="162" lengthAdjust="spacingAndGlyphs">Gangtok</text>
            <text class="region" x="182" y="682" textLength="178" lengthAdjust="spacingAndGlyphs">कोशी प्रदेश</text>
            <text x="587" y="801" textLength="194" lengthAdjust="spacingAndGlyphs">Darjeeling</text>
            <text x="228" y="879" textLength="72" lengthAdjust="spacingAndGlyphs">धरान</text>
            <text x="409" y="924" textLength="124" lengthAdjust="spacingAndGlyphs">बिर्तामोड</text>
            <text x="226" y="965" textLength="144" lengthAdjust="spacingAndGlyphs">बिराटनगर</text>
            <text class="big" x="649" y="934" textLength="156" lengthAdjust="spacingAndGlyphs">Siliguri</text>
            <text x="1051" y="958" textLength="200" lengthAdjust="spacingAndGlyphs">Alipurduar</text>
            <text x="1091" y="530" textLength="104" lengthAdjust="spacingAndGlyphs">ཐིམ་ཕུ</text>
            <text x="1013" y="637" textLength="64" lengthAdjust="spacingAndGlyphs">སྤ་རོ</text>
            <text x="696" y="1018" textLength="116" lengthAdjust="spacingAndGlyphs">পঞ্চগড়</text>
            <text x="1027" y="1085" textLength="204" lengthAdjust="spacingAndGlyphs">Koch Bihar</text>
            <text x="473" y="1116" textLength="210" lengthAdjust="spacingAndGlyphs">Kishanganj</text>
            <text x="757" y="1178" textLength="156" lengthAdjust="spacingAndGlyphs">ঠাকুরগাঁও</text>
            <text x="1139" y="1222" textLength="198" lengthAdjust="spacingAndGlyphs">লালমনিরহাট</text>
            <g class="dots"><circle cx="166" cy="68" r="7"/><circle cx="402" cy="189" r="7"/><circle cx="681" cy="230" r="7"/><circle cx="1109" cy="112" r="7"/><circle cx="718" cy="624" r="7"/><circle cx="588" cy="744" r="7"/><circle cx="228" cy="837" r="7"/><circle cx="487" cy="907" r="7"/><circle cx="228" cy="984" r="7"/><circle cx="648" cy="877" r="11"/><circle cx="697" cy="1036" r="7"/><circle cx="1028" cy="1040" r="7"/><circle cx="665" cy="1165" r="7"/><circle cx="1024" cy="1206" r="7"/><circle cx="1012" cy="581" r="7"/><circle cx="1093" cy="565" r="15"/><circle class="core" cx="1093" cy="565" r="5"/></g>
          </g>
          <g class="names" transform="translate(640 620) scale(.33333)">
            <text x="62" y="42" textLength="76" lengthAdjust="spacingAndGlyphs">Mau</text>
            <text x="271" y="56" textLength="102" lengthAdjust="spacingAndGlyphs">Ballia</text>
            <text x="493" y="47" textLength="160" lengthAdjust="spacingAndGlyphs">Chhapra</text>
            <text x="75" y="125" textLength="150" lengthAdjust="spacingAndGlyphs">hazipur</text>
            <text x="204" y="193" textLength="110" lengthAdjust="spacingAndGlyphs">Buxar</text>
            <text x="461" y="197" textLength="104" lengthAdjust="spacingAndGlyphs">Arrah</text>
            <text class="big" x="630" y="186" textLength="128" lengthAdjust="spacingAndGlyphs">Patna</text>
            <text x="512" y="303" textLength="148" lengthAdjust="spacingAndGlyphs">Paliganj</text>
            <text x="770" y="285" textLength="230" lengthAdjust="spacingAndGlyphs">Bihar Sharif</text>
            <text x="1034" y="243" textLength="146" lengthAdjust="spacingAndGlyphs">Munger</text>
            <text x="220" y="384" textLength="160" lengthAdjust="spacingAndGlyphs">Sasaram</text>
            <text class="big" x="587" y="519" textLength="112" lengthAdjust="spacingAndGlyphs">Gaya</text>
            <text x="354" y="528" textLength="234" lengthAdjust="spacingAndGlyphs">Aurangabad</text>
            <text x="1212" y="571" textLength="166" lengthAdjust="spacingAndGlyphs">Deoghar</text>
            <text x="1067" y="759" textLength="124" lengthAdjust="spacingAndGlyphs">Giridih</text>
            <text x="719" y="838" textLength="216" lengthAdjust="spacingAndGlyphs">Hazaribagh</text>
            <text class="big" x="1111" y="848" textLength="206" lengthAdjust="spacingAndGlyphs">Dhanbad</text>
            <text class="region it" x="644" y="938" textLength="206" lengthAdjust="spacingAndGlyphs">Jharkhand</text>
            <text x="1006" y="970" textLength="132" lengthAdjust="spacingAndGlyphs">Bokaro</text>
            <text x="1088" y="1040" textLength="132" lengthAdjust="spacingAndGlyphs">Purulia</text>
            <text class="big" x="704" y="1094" textLength="150" lengthAdjust="spacingAndGlyphs">Ranchi</text>
            <g class="dots"><circle cx="272" cy="70" r="7"/><circle cx="492" cy="62" r="7"/><circle cx="66" cy="139" r="7"/><circle cx="203" cy="147" r="7"/><circle cx="460" cy="151" r="7"/><circle cx="629" cy="131" r="10"/><circle cx="512" cy="248" r="7"/><circle cx="1127" cy="228" r="7"/><circle cx="220" cy="402" r="7"/><circle cx="589" cy="462" r="11"/><circle cx="354" cy="478" r="7"/><circle cx="1212" cy="590" r="7"/><circle cx="1066" cy="711" r="7"/><circle cx="718" cy="788" r="7"/><circle cx="1110" cy="868" r="11"/><circle cx="1006" cy="925" r="7"/><circle cx="1086" cy="1055" r="7"/><circle cx="702" cy="1038" r="11"/></g>
          </g>
          <g class="names" transform="translate(1040 620) scale(.33333)">
            <text x="296" y="47" textLength="120" lengthAdjust="spacingAndGlyphs">Purnia</text>
            <text x="333" y="143" textLength="132" lengthAdjust="spacingAndGlyphs">Katihar</text>
            <text class="big" x="115" y="258" textLength="238" lengthAdjust="spacingAndGlyphs">Bhagalpur</text>
            <text x="539" y="181" textLength="138" lengthAdjust="spacingAndGlyphs">Raiganj</text>
            <text x="724" y="176" textLength="158" lengthAdjust="spacingAndGlyphs">দিনাজপুর</text>
            <text class="region" x="848" y="56" textLength="226" lengthAdjust="spacingAndGlyphs">রংপুর বিভাগ</text>
            <text x="777" y="273" textLength="186" lengthAdjust="spacingAndGlyphs">Balurghat</text>
            <text x="1041" y="256" textLength="166" lengthAdjust="spacingAndGlyphs">Ranigonj</text>
            <text x="1010" y="303" textLength="104" lengthAdjust="spacingAndGlyphs">Bazar</text>
            <text x="542" y="362" textLength="116" lengthAdjust="spacingAndGlyphs">Malda</text>
            <text x="838" y="440" textLength="90" lengthAdjust="spacingAndGlyphs">নওগাঁ</text>
            <text class="big" x="996" y="418" textLength="116" lengthAdjust="spacingAndGlyphs">বগুড়া</text>
            <text x="590" y="527" textLength="236" lengthAdjust="spacingAndGlyphs">চাঁপাইনবাবগঞ্জ</text>
            <text class="region" x="836" y="556" textLength="154" lengthAdjust="spacingAndGlyphs">রাজশাহী</text>
            <text class="region" x="835" y="611" textLength="110" lengthAdjust="spacingAndGlyphs">বিভাগ</text>
            <text x="1118" y="582" textLength="168" lengthAdjust="spacingAndGlyphs">সিরাজগঞ্জ</text>
            <text class="region it" x="510" y="623" textLength="240" lengthAdjust="spacingAndGlyphs">West Bengal</text>
            <text x="583" y="729" textLength="238" lengthAdjust="spacingAndGlyphs">Berhampore</text>
            <text x="1196" y="738" textLength="124" lengthAdjust="spacingAndGlyphs">টাঙ্গাইল</text>
            <text x="949" y="765" textLength="98" lengthAdjust="spacingAndGlyphs">পাবনা</text>
            <text x="317" y="807" textLength="84" lengthAdjust="spacingAndGlyphs">Siuri</text>
            <text x="838" y="844" textLength="100" lengthAdjust="spacingAndGlyphs">কুষ্টিয়া</text>
            <text x="1128" y="856" textLength="164" lengthAdjust="spacingAndGlyphs">মানিকগঞ্জ</text>
            <text x="582" y="858" textLength="176" lengthAdjust="spacingAndGlyphs">Beldanga</text>
            <text x="802" y="911" textLength="136" lengthAdjust="spacingAndGlyphs">চুয়াডাঙ্গা</text>
            <text class="big" x="113" y="965" textLength="178" lengthAdjust="spacingAndGlyphs">Asansol</text>
            <text x="355" y="990" textLength="182" lengthAdjust="spacingAndGlyphs">Durgapur</text>
            <text x="923" y="1022" textLength="144" lengthAdjust="spacingAndGlyphs">ঝিনাইদহ</text>
            <text x="672" y="1073" textLength="254" lengthAdjust="spacingAndGlyphs">Krishnanagar</text>
            <text x="936" y="1102" textLength="98" lengthAdjust="spacingAndGlyphs">যশোর</text>
            <text x="146" y="1139" textLength="160" lengthAdjust="spacingAndGlyphs">Bankura</text>
            <text x="441" y="1135" textLength="222" lengthAdjust="spacingAndGlyphs">Bardhaman</text>
            <text x="698" y="1166" textLength="182" lengthAdjust="spacingAndGlyphs">Ranaghat</text>
            <text x="1165" y="1168" textLength="182" lengthAdjust="spacingAndGlyphs">গোপালগঞ্জ</text>
            <text x="470" y="1244" textLength="294" lengthAdjust="spacingAndGlyphs">Hugli-Chuchura</text>
            <text x="735" y="1236" textLength="112" lengthAdjust="spacingAndGlyphs">Habra</text>
            <text class="region" x="1022" y="1275" textLength="226" lengthAdjust="spacingAndGlyphs">খুলনা বিভাগ</text>
            <g class="dots"><circle cx="333" cy="159" r="7"/><circle cx="113" cy="281" r="11"/><circle cx="539" cy="123" r="7"/><circle cx="725" cy="127" r="7"/><circle cx="778" cy="289" r="7"/><circle cx="939" cy="261" r="7"/><circle cx="544" cy="378" r="7"/><circle cx="839" cy="458" r="7"/><circle cx="996" cy="442" r="11"/><circle cx="592" cy="544" r="7"/><circle cx="1118" cy="602" r="7"/><circle cx="584" cy="744" r="7"/><circle cx="1194" cy="686" r="7"/><circle cx="948" cy="784" r="7"/><circle cx="317" cy="824" r="7"/><circle cx="908" cy="829" r="7"/><circle cx="1228" cy="840" r="7"/><circle cx="584" cy="812" r="7"/><circle cx="802" cy="930" r="7"/><circle cx="113" cy="912" r="11"/><circle cx="248" cy="973" r="7"/><circle cx="923" cy="970" r="7"/><circle cx="673" cy="1026" r="7"/><circle cx="936" cy="1120" r="7"/><circle cx="146" cy="1095" r="7"/><circle cx="442" cy="1087" r="7"/><circle cx="698" cy="1119" r="7"/><circle cx="1166" cy="1184" r="7"/><circle cx="637" cy="1228" r="7"/><circle cx="734" cy="1252" r="7"/></g>
          </g>
          <g class="names" transform="translate(1420 780) scale(.33333)">
            <text class="region" x="721" y="82" textLength="236" lengthAdjust="spacingAndGlyphs">সিলেট বিভাগ</text>
            <text x="377" y="182" textLength="178" lengthAdjust="spacingAndGlyphs">কিশোরগঞ্জ</text>
            <text x="608" y="200" textLength="112" lengthAdjust="spacingAndGlyphs">হবিগঞ্জ</text>
            <text x="498" y="302" textLength="208" lengthAdjust="spacingAndGlyphs">ব্রাহ্মণবাড়িয়া</text>
            <text class="big" x="232" y="372" textLength="90" lengthAdjust="spacingAndGlyphs">ঢাকা</text>
            <text class="big" x="1097" y="388" textLength="142" lengthAdjust="spacingAndGlyphs">Aizawl</text>
            <text class="region it" x="675" y="429" textLength="140" lengthAdjust="spacingAndGlyphs">Tripura</text>
            <text x="379" y="469" textLength="178" lengthAdjust="spacingAndGlyphs">নারায়ণগঞ্জ</text>
            <text class="region big" x="88" y="522" textLength="226" lengthAdjust="spacingAndGlyphs">বাংলাদেশ</text>
            <text class="big" x="523" y="586" textLength="130" lengthAdjust="spacingAndGlyphs">কুমিল্লা</text>
            <text x="162" y="622" textLength="160" lengthAdjust="spacingAndGlyphs">মাদারীপুর</text>
            <text x="329" y="657" textLength="110" lengthAdjust="spacingAndGlyphs">চাঁদপুর</text>
            <text x="603" y="687" textLength="82" lengthAdjust="spacingAndGlyphs">ফেনী</text>
            <text x="821" y="647" textLength="170" lengthAdjust="spacingAndGlyphs">খাগড়াছড়ি</text>
            <text class="region it" x="1153" y="627" textLength="172" lengthAdjust="spacingAndGlyphs">Mizoram</text>
            <text class="region" x="226" y="797" textLength="150" lengthAdjust="spacingAndGlyphs">বরিশাল</text>
            <text x="1367" y="-1312" textLength="60" lengthAdjust="spacingAndGlyphs">ian</text>
            <g class="dots"><circle cx="379" cy="130" r="7"/><circle cx="610" cy="150" r="7"/><circle cx="497" cy="320" r="7"/><circle cx="1096" cy="408" r="11"/><circle cx="271" cy="457" r="7"/><circle cx="521" cy="522" r="11"/><circle cx="166" cy="639" r="7"/><circle cx="327" cy="620" r="7"/><circle cx="603" cy="704" r="7"/><circle cx="821" cy="663" r="7"/><circle cx="230" cy="401" r="15"/><circle class="core" cx="230" cy="401" r="5"/></g>
          </g>

          <path class="routeline" d="M1445 554L1430 548 1410 545 1395 544 1388 549 1379 544 1347 539 1330 530 1312 533 1301 538 1283 537 1268 530 1255 520 1248 530 1236 532 1233 545 1242 560 1237 570 1225 582 1204 594 1184 610 1184 620 1181 631 1170 628 1158 635 1141 643 1135 655 1130 668 1115 681 1104 693 1085 694 1072 692 1045 692 1030 678 1018 678 1009 690 975 690 961 687 957 698 947 694 938 708 929 718 902 718 889 731 887 744 876 744 871 739 868 742 873 732"/>
          <g stroke="#111" stroke-width="1.800" fill="none"><path d="M839 667.500q3-1.500 6 0t6 0 6 0M839 672q3-1.500 6 0t6 0 6 0M839 676q3-1.500 6 0t6 0 6 0"/></g>
          <path d="M874 732l5-14 14-18 6-2 3 6-4 10z" fill="url(#shade)"/>
          <path d="M873 732.500C870 716 857 708 857 696a16 16 0 0 1 32.500 0C889.500 708 876 716 873 732.500z" fill="url(#pin)" stroke="#2b6da5"/>
          <circle cx="873" cy="696" r="5.700" fill="#fff"/>
        </svg>

        <div class="zoom"><a>+</a><a>−</a></div>
        <div class="scale"><span class="km">100 km</span><span class="mi">50 mi</span></div>
        <div class="attrib"><svg viewBox="0 0 16 10"><path fill="#4c7be1" d="M0 0h16v5H0z"/><path fill="#ffd500" d="M0 5h16v5H0z"/></svg><a>Leaflet</a> | © <a>OpenStreetMap</a> contributors</div>

        <div class="itinerary">
          <div class="alt-route main">
            <div class="steps">
              <h2>NH27, NH31</h2>
              <h3>882.6 km, 10 h 56 min</h3>
              <ul>
                <li><svg><use href="#i-depart"/></svg><span>Head west</span><b>80 m</b></li>
                <li><svg><use href="#i-left"/></svg><span>Turn left</span><b>55 m</b></li>
                <li><svg><use href="#i-right"/></svg><span>Turn right</span><b>6 m</b></li>
                <li><svg><use href="#i-left"/></svg><span>Turn left</span><b>700 m</b></li>
                <li><svg><use href="#i-left"/></svg><span>Turn left</span><b>1.5 km</b></li>
                <li><svg><use href="#i-left"/></svg><span>Keep left at the fork</span><b>3 km</b></li>
                <li><svg><use href="#i-left"/></svg><span>Keep left at the fork</span><b>350 m</b></li>
                <li><svg><use href="#i-right"/></svg><span>Turn right</span><b>600 m</b></li>
                <li><svg><use href="#i-right"/></svg><span>Merge right onto NH27</span><b>10 km</b></li>
                <li><svg><use href="#i-left"/></svg><span>Take the ramp on the left</span><b>200 m</b></li>
                <li><svg><use href="#i-slight"/></svg><span>Make a slight left</span><b>70 m</b></li>
                <li><svg><use href="#i-right"/></svg><span>Merge right onto NH427</span><b>6 km</b></li>
              </ul>
            </div>
            <div class="track"><div class="thumb"></div></div>
          </div>
          <div class="alt-route second">
            <h2>NH17, NH31</h2>
            <h3>904.8 km, 11 h 57 min</h3>
            <ul><li><svg><use href="#i-depart"/></svg><span>Head west</span><b>80 m</b></li></ul>
          </div>
        </div>

        <div class="toolbar">
          <div class="pm"><svg class="ic"><use href="#i-plus"/></svg><svg class="ic"><use href="#i-minus"/></svg></div>
          <div class="print"><svg class="ic"><use href="#i-print"/></svg>Print</div>
        </div>
      </div>
    </section>
  </main>
</div>
<div class="scrollbar"><i class="up"></i><i class="grip"></i><i class="down"></i></div>
</div>
</body>
</html>
```

FILE: styles.css
```css
* { box-sizing: border-box; }
body { margin: 0; font-family: "Open Sans", "Noto Sans", sans-serif; font-size: 20px; color: #212529; background: #f8f9fa; overflow: hidden; }
button { font: inherit; color: inherit; margin: 0; padding: 0; border: 0; background: none; }
h2, h3, h5, h6, ul, dl, dd { margin: 0; padding: 0; }
.defs { position: absolute; }
.ic { display: block; fill: currentColor; flex: none; }

.shell { display: flex; height: 1079px; }
.page { flex: 1; min-width: 0; overflow: hidden; }

/* window scrollbar */
.scrollbar { width: 22px; background: #fcfcfc; display: flex; flex-direction: column; align-items: center; padding: 13px 0 11px 1px; }
.up, .down { border: 7px solid transparent; border-top: 0; border-bottom: 11px solid #8b8b8b; }
.down { border-bottom: 0; border-top: 11px solid #8b8b8b; margin-top: auto; }
.grip { width: 13px; height: 509px; margin-top: 11px; border-radius: 7px; background: #8b8b8b; }

/* top bar */
.navbar { height: 80px; background: #dc3545; color: #fff; display: flex; align-items: center; padding-left: 74px; box-shadow: 0 2px 10px rgba(0,0,0,.1); }
.brand { display: flex; width: 832px; height: 42px; font-size: 25px; line-height: 38px; white-space: nowrap; }
.broken { width: 20px; height: 21px; margin: 3px 1px 0 0; }
.alt { width: 264px; padding-top: 5px; letter-spacing: .3px; }
.name { padding-top: 1px; letter-spacing: .32px; }
.lang { display: flex; width: 85px; height: 41px; margin-right: 22px; border-radius: 5px; overflow: hidden; background: #f8f9fa; color: #000; font-size: 17.500px; }
.lang button { flex: 1; padding-bottom: 1px; }
.lang .on { flex: 0 0 47px; background: #c6c7c8; border: 1px solid #babbbc; border-radius: 5px 0 0 5px; }
.mode { display: flex; align-items: center; width: 161px; height: 41px; padding: 0 0 1px 12px; gap: 4px; border-radius: 5px; background: #ffc107; color: #000; font-size: 18px; letter-spacing: .1px; white-space: nowrap; }
.mode .ic { width: 24px; height: 19px; }
nav { display: flex; margin-left: 32px; color: rgba(255,255,255,.55); font-size: 21.500px; letter-spacing: -.6px; line-height: 30px; padding-top: 2px; white-space: nowrap; }
nav a { display: flex; align-items: center; gap: 5px; flex: none; }
nav .ic { height: 22px; }
.n1 { width: 161px; } .n1 .ic { width: 26px; }
.n2 { width: 89px; }
.n3 { width: 110px; } .n3 .ic { width: 20px; }
.n4 { width: 154px; } .n4 .ic { width: 23px; }
.n5 .ic { width: 23px; }

/* columns and cards */
main { display: flex; gap: 33px; padding: 82px 16px 0; height: 999px; }
aside { width: 600px; flex: none; display: flex; flex-direction: column; gap: 33px; }
.card { background: #fff; border-radius: 10px; box-shadow: 0 4px 8px rgba(0,0,0,.08); flex: none; }
.mapcard { flex: 1; height: 940px; }
.head { height: 66px; display: flex; align-items: center; gap: 10px; padding: 0 27px; border-radius: 10px 10px 0 0; border-bottom: 1px solid rgba(0,0,0,.176); color: #fff; font: 700 27px/1 Roboto, sans-serif; }
.head .ic { width: 28px; height: 28px; margin-top: -3px; }
.blue { background: #0d6efd; } .green { background: #198754; height: 65px; } .cyan { background: #0dcaf0; }
.cyan .ic { width: 32px; }
.cyan { padding-left: 26px; }

.form { display: flex; flex-direction: column; padding: 21px 21px 21px 22px; }
.form label { height: 34px; line-height: 34px; margin-bottom: 9px; letter-spacing: .05px; }
.select { display: flex; align-items: center; justify-content: space-between; height: 50px; margin-bottom: 22px; padding: 1px 19px 0 16px; border: 1px solid #dee2e6; border-radius: 7px; letter-spacing: .1px; }
.select:first-of-type { margin-top: 1px; }
.select svg { width: 17px; height: 17px; margin-top: -3px; fill: none; stroke: #343a40; stroke-width: 2; stroke-linecap: round; stroke-linejoin: round; }
.group { display: flex; height: 51px; margin-bottom: 22px; color: #0d6efd; }
.group button { display: flex; align-items: center; justify-content: center; gap: 14px; width: 186px; border: 1px solid #0d6efd; border-radius: 0 7px 7px 0; }
.group .drone { width: 177px; padding-left: 16px; border-radius: 0; border-right: 0; }
.group .active { width: 194px; gap: 15px; background: #0d6efd; color: #fff; border-radius: 7px 0 0 7px; }
.group .ic { width: 28px; height: 23px; }
.btn { display: flex; align-items: center; justify-content: center; gap: 16px; height: 51px; border-radius: 7px; letter-spacing: .25px; }
.btn .ic { width: 23px; height: 23px; }
.primary { height: 50px; background: #0d6efd; color: #fff; margin-bottom: 11px; }
.danger { border: 1px solid #dc3545; color: #dc3545; }

.summary { margin: 22px 21px 0 22px; height: 200px; padding: 15px 17px 0 16px; border-left: 4px solid #dc3545; border-radius: 5px; background: #fff5f5; }
.trip { display: flex; align-items: center; height: 30px; }
.trip .ic { width: 28px; height: 23px; margin: -3px 16px 0 0; }
.trip h6 { font: 700 22px/30px Roboto, sans-serif; letter-spacing: -.18px; flex: 1; white-space: nowrap; }
.badge { width: 91px; height: 28px; border-radius: 8px; background: #dc3545; color: #fff; font-size: 16px; font-weight: 700; line-height: 28px; text-align: center; }
.summary dl { display: grid; grid-template-columns: 276px 1fr; margin-top: 10px; font-size: 17.500px; line-height: 28px; }
.summary dt { color: #6c757d; letter-spacing: -.1px; }
.summary dd { letter-spacing: .2px; }

/* map */
.map { position: relative; height: 810px; overflow: hidden; border-radius: 0 0 10px 10px; }
.tiles { display: block; width: 1232px; height: 810px; }
.wood { fill: #bfdbb1; } .scrub { fill: #bfdcb3; } .ice { fill: #a9d3fc; } .lake { fill: #aad3df; }
.farm { fill: #f1f3de; } .farm.green { fill: #dcf1c8; }
.river, .road, .admin, .nation, .pinkroad { fill: none; stroke-linejoin: round; }
.river { stroke: #aad3df; stroke-width: 4.500; }
.road { stroke: #fbab93; stroke-width: 4.500; }
.pinkroad { stroke: #ee87a8; stroke-width: 5; }
.admin { stroke: #bfacc4; stroke-width: 5; }
.nation { stroke: #bda9bf; stroke-width: 11; }
.seam { stroke: #d9d8dc; stroke-width: .5; fill: none; }
.names { font-family: "Noto Sans", "Noto Sans Devanagari", "Noto Sans Bengali", "Noto Sans CJK SC", sans-serif; font-size: 42px; fill: #3c3c3c; }
.names text { text-anchor: middle; paint-order: stroke; stroke: rgba(255,255,255,.6); stroke-width: 7px; stroke-linejoin: round; }
.names .big { font-size: 48px; }
.names .region { fill: #936f9a; }
.names .region:not(.big) { font-size: 44px; }
.names .it { font-style: italic; }
.dots { fill: #fff; stroke: #555; stroke-width: 4; }
.dots .core { fill: #555; stroke: none; }
.routeline { fill: none; stroke: #dc3545; stroke-width: 8; stroke-linejoin: round; stroke-linecap: round; opacity: .85; }

.zoom { position: absolute; left: 14px; top: 14px; width: 42px; height: 83px; border: 1px solid #b7b6b2; border-radius: 5px; overflow: hidden; background: #fff; }
.zoom a { display: block; height: 41px; padding-left: 2px; font: 700 31px/41px "Liberation Sans", sans-serif; color: #000; text-align: center; }
.zoom a + a { border-top: 1px solid #ccc; line-height: 40px; }
.scale { position: absolute; left: 6px; bottom: 7px; display: flex; flex-direction: column; align-items: flex-start; font: 16px/23px "Liberation Sans", sans-serif; color: #444; }
.scale span { border: 2px solid #777; border-top: 0; background: rgba(255,255,255,.8); padding-left: 7px; }
.km { width: 123px; height: 24px; }
.scale .mi { width: 99px; height: 23px; margin-top: -2px; border-top: 2px solid #777; border-bottom: 0; line-height: 22px; }
.attrib { position: absolute; right: 0; bottom: 0; width: 316px; height: 23px; padding-left: 7px; background: rgba(255,255,255,.8); font: 16px/23px "Liberation Sans", sans-serif; color: #333; white-space: nowrap; letter-spacing: .05px; }
.attrib svg { width: 16px; height: 11px; margin-right: 4px; }
.attrib a { color: #0078a8; }

.itinerary { position: absolute; left: 787px; top: 14px; width: 431px; height: 545px; border: 1px solid #aaa; border-width: 1px 2px 2px 1px; border-radius: 5px; overflow: hidden; background: #fff; font: 16px/22px "Liberation Sans", sans-serif; letter-spacing: .04px; color: #333; }
.alt-route h2 { font: 700 19px/24px Roboto, sans-serif; }
.alt-route h3 { font: 400 16px/22px Roboto, sans-serif; letter-spacing: .06px; margin-top: 10px; }
.main { display: flex; height: 440px; border-bottom: 1px solid #bbb; }
.steps { flex: 1; padding: 15px 0 0 8px; }
.main h2 { color: #212529; }
.alt-route ul { list-style: none; margin-top: 10px; }
.alt-route li { display: grid; grid-template-columns: 31px 308px 1fr; align-items: center; height: 29.700px; }
.alt-route li b { font-weight: 400; }
.alt-route li svg { width: 18px; height: 18px; margin: -1px 0 0 6px; fill: #000; }
.track { width: 10px; background: #ececec; }
.thumb { height: 88px; background: #8b8b8b; border-radius: 0 0 3px 3px; }
.second { height: 95px; padding: 15px 0 0 8px; overflow: hidden; color: #8f8f8f; }
.second li { grid-template-columns: 31px 318px 1fr; }

.toolbar { position: absolute; left: 1015px; top: 13px; display: flex; gap: 17px; width: 203px; height: 63px; padding: 11px 10px; background: #fff; border-radius: 5px; box-shadow: 0 0 12px rgba(0,0,0,.1); color: #000; }
.pm { display: flex; align-items: center; justify-content: space-around; width: 79px; height: 41px; padding-left: 1px; border-radius: 5px; background: #f8f9fa; }
.pm .ic { width: 17px; height: 20px; }
.print { display: flex; align-items: center; gap: 6px; width: 87px; height: 41px; padding: 0 0 1px 12px; border-radius: 5px; background: #f8f9fa; font-size: 17.500px; letter-spacing: -.1px; }
.print .ic { width: 19px; height: 19px; }
```
